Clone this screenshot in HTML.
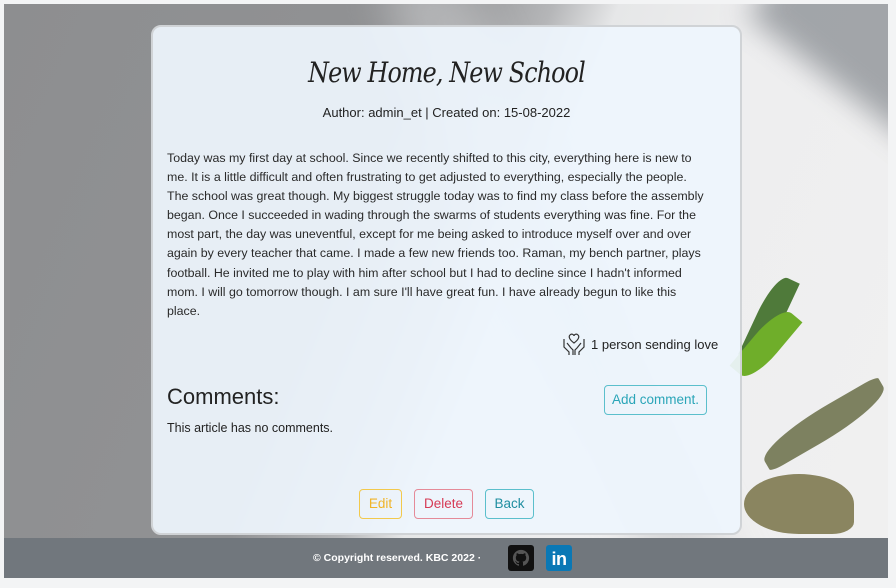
<!DOCTYPE html>
<html><head><meta charset="utf-8"><style>
html,body{margin:0;padding:0;width:896px;height:588px;overflow:hidden;background:#f3f4f5;font-family:"Liberation Sans",Arial,sans-serif;}
.bg{position:absolute;left:4px;top:4px;width:884px;height:534px;overflow:hidden;
background:linear-gradient(112deg,#8d8e90 0%,#919294 40%,#b5b6b8 50%,#e6e7e8 56%,#eeeeef 70%,#f0f0f0 100%);}
.shadow{position:absolute;left:760px;top:-40px;width:300px;height:160px;background:#8f9398;filter:blur(14px);transform:rotate(38deg);opacity:.8}
.shadow2{position:absolute;left:520px;top:-60px;width:80px;height:700px;background:#c9cacc;filter:blur(20px);transform:rotate(-25deg);opacity:.6}
.leaf{position:absolute;border-radius:50% 0 50% 0;}
.card{position:absolute;left:151px;top:25px;width:587px;height:506px;border:2px solid #d0d3d6;border-radius:10px;background:rgba(238,245,253,.93);}
h1{position:absolute;left:0;right:0;top:28px;margin:0;line-height:36px;text-align:center;font-family:"DejaVu Serif",serif;font-style:italic;font-weight:normal;font-size:28px;color:#222;letter-spacing:-1px;transform:scaleX(.85);}
.meta{position:absolute;left:0;right:0;top:78px;text-align:center;font-size:13px;color:#222;}
.body{position:absolute;left:14px;top:122px;font-size:12.4px;line-height:19.1px;color:#2a2a2a;white-space:nowrap;}
.love{position:absolute;left:408px;top:304px;font-size:13px;color:#222;display:flex;align-items:center;gap:4px}
.ch{position:absolute;left:14px;top:357px;font-size:22px;color:#222;}
.nc{position:absolute;left:14px;top:394px;font-size:12.5px;color:#222;}
.btn{position:absolute;border:1px solid;border-radius:4px;font-size:13.5px;text-align:center;line-height:28px;height:28px;background:transparent;}
.footer{position:absolute;left:4px;top:538px;width:884px;height:40px;background:#71777d;}
.copy{position:absolute;left:313px;top:552px;color:#fff;font-size:10.5px;font-weight:bold;}
</style></head><body>
<div class="bg">
<div class="shadow2"></div>
<div class="shadow"></div>
<div class="leaf" style="left:752px;top:270px;width:26px;height:90px;background:#4f7a3a;transform:rotate(25deg)"></div>
<div class="leaf" style="left:748px;top:300px;width:28px;height:80px;background:#6fae2a;transform:rotate(40deg)"></div>
<div class="leaf" style="left:750px;top:405px;width:140px;height:30px;background:#7d8160;transform:rotate(-30deg);border-radius:60% 10% 60% 10%"></div>
<div class="leaf" style="left:740px;top:470px;width:110px;height:60px;background:#8a8560;border-radius:50% 50% 20% 50%;"></div>
</div>
<div class="card">
<h1>New Home, New School</h1>
<div class="meta">Author: admin_et | Created on: 15-08-2022</div>
<div class="body">Today was my first day at school. Since we recently shifted to this city, everything here is new to<br>me. It is a little difficult and often frustrating to get adjusted to everything, especially the people.<br>The school was great though. My biggest struggle today was to find my class before the assembly<br>began. Once I succeeded in wading through the swarms of students everything was fine. For the<br>most part, the day was uneventful, except for me being asked to introduce myself over and over<br>again by every teacher that came. I made a few new friends too. Raman, my bench partner, plays<br>football. He invited me to play with him after school but I had to decline since I hadn't informed<br>mom. I will go tomorrow though. I am sure I'll have great fun. I have already begun to like this<br>place.</div>
<div class="love"><svg width="26" height="26" viewBox="0 0 26 26" fill="none" stroke="#333" stroke-width="1.2"><path d="M13 12 C9 9 7 6 9 4 C11 2 13 4 13 5 C13 4 15 2 17 4 C19 6 17 9 13 12Z"/><path d="M3 8 L3 16 L8 21 L8 24 M6 12 L10 17 L12 19 L12 24"/><path d="M23 8 L23 16 L18 21 L18 24 M20 12 L16 17 L14 19 L14 24"/></svg><span>1 person sending love</span></div>
<div class="ch">Comments:</div>
<div class="nc">This article has no comments.</div>
<div class="btn" style="left:451px;top:358px;width:101px;border-color:#5bbfcc;color:#2aa5b8;">Add comment.</div>
<div class="btn" style="left:206px;top:462px;width:41px;border-color:#f2c94c;color:#f0b429;">Edit</div>
<div class="btn" style="left:261px;top:462px;width:57px;border-color:#e58a98;color:#d63a55;">Delete</div>
<div class="btn" style="left:332px;top:462px;width:47px;border-color:#5bbfcc;color:#1f8ea0;">Back</div>
</div>
<div class="footer"></div>
<div class="copy">© Copyright reserved. KBC 2022 ·</div>
<div style="position:absolute;left:508px;top:545px;width:26px;height:26px;background:#111;border-radius:3px;">
<svg width="26" height="26" viewBox="0 0 16 16"><path fill="#555" transform="translate(3 3) scale(.625)" d="M8 0C3.58 0 0 3.58 0 8c0 3.540 2.290 6.530 5.470 7.590.4.07.55-.17.55-.38v-1.33c-2.230.48-2.700-1.070-2.700-1.070-.36-.92-.89-1.170-.89-1.170-.73-.5.05-.49.05-.49.8.06 1.230.83 1.230.83.72 1.220 1.870.87 2.330.66.07-.52.28-.87.51-1.070-1.780-.2-3.640-.89-3.640-3.950 0-.87.31-1.590.82-2.150-.08-.2-.36-1.020.08-2.120 0 0 .67-.21 2.200.82a7.600 7.600 0 0 1 4 0c1.530-1.040 2.200-.82 2.200-.82.44 1.100.16 1.920.08 2.120.51.56.82 1.270.82 2.150 0 3.070-1.870 3.750-3.650 3.950.29.25.54.73.54 1.480v2.200c0 .21.15.46.55.38A8 8 0 0 0 16 8c0-4.420-3.580-8-8-8z"/></svg></div>
<div style="position:absolute;left:546px;top:545px;width:26px;height:26px;background:#0a78b5;border-radius:3px;color:#fff;font-weight:bold;font-size:18px;line-height:28px;text-align:center;letter-spacing:-0.5px">in</div>
</body></html>
